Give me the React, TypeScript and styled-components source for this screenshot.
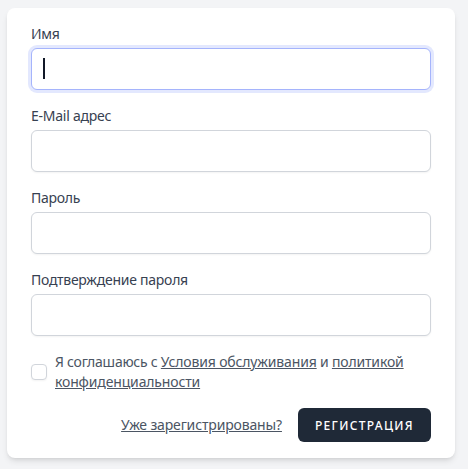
import styled, { createGlobalStyle, css } from "styled-components";

const Global = createGlobalStyle`
  html, body {
    margin: 0;
    padding: 0;
    background: #f3f4f6;
    font-family: "Noto Sans", "Open Sans", sans-serif;
  }
  * { box-sizing: border-box; }
`;

const Page = styled.div`
  padding: 8px 7px;
`;

const Card = styled.form`
  width: 448px;
  padding: 16px 24px;
  background: #fff;
  border-radius: 8px;
  box-shadow: 0 4px 6px -1px rgba(0, 0, 0, 0.1), 0 2px 4px -2px rgba(0, 0, 0, 0.1);
`;

const Field = styled.div<{ $first?: boolean }>`
  margin-top: ${(p) => (p.$first ? 0 : 16)}px;
`;

const Label = styled.label`
  display: block;
  font-size: 14px;
  line-height: 20px;
  font-weight: 400;
  letter-spacing: -0.25px;
  color: #374151;
`;

const InputWrap = styled.div`
  position: relative;
  margin-top: 4px;
`;

const Input = styled.input<{ $focused?: boolean }>`
  display: block;
  width: 100%;
  height: 42px;
  padding: 8px 12px;
  font: inherit;
  font-size: 16px;
  line-height: 24px;
  border: 1px solid #d1d5db;
  border-radius: 6px;
  box-shadow: 0 1px 2px rgba(0, 0, 0, 0.05);
  outline: none;
  caret-color: transparent;
  ${(p) =>
    p.$focused &&
    css`
      border-color: #a5b4fc;
      box-shadow: 0 0 0 3px rgba(199, 210, 254, 0.5);
    `}
`;

const Caret = styled.span`
  position: absolute;
  left: 12px;
  top: 10px;
  width: 1.5px;
  height: 21px;
  background: #111827;
`;

const AgreeRow = styled.div`
  display: flex;
  align-items: flex-start;
  margin-top: 16px;
`;

const Check = styled.span`
  flex: none;
  width: 16px;
  height: 16px;
  margin-top: 12px;
  border: 1px solid #d1d5db;
  border-radius: 4px;
  background: #fff;
  box-shadow: 0 1px 2px rgba(0, 0, 0, 0.05);
`;

const AgreeText = styled.div`
  margin-left: 8px;
  font-size: 14px;
  line-height: 20px;
  letter-spacing: -0.25px;
  color: #4b5563;
`;

const Link = styled.a`
  color: #4b5563;
  text-decoration: underline;
  font-size: 14px;
  line-height: 20px;
  letter-spacing: -0.15px;
`;

const Actions = styled.div`
  display: flex;
  align-items: center;
  justify-content: flex-end;
  gap: 16px;
  margin-top: 16px;
`;

const Button = styled.button`
  display: inline-flex;
  align-items: center;
  height: 34px;
  padding: 0 16px;
  border: 1px solid transparent;
  border-radius: 6px;
  background: #1f2937;
  color: #fff;
  font: inherit;
  font-size: 12px;
  font-weight: 500;
  letter-spacing: 0.11em;
  text-transform: uppercase;
`;

const fields = ["Имя", "E-Mail адрес", "Пароль", "Подтверждение пароля"];

export default function App() {
  return (
    <Page>
      <Global />
      <Card onSubmit={(e) => e.preventDefault()}>
        {fields.map((f, i) => (
          <Field key={f} $first={i === 0}>
            <Label>{f}</Label>
            <InputWrap>
              <Input
                $focused={i === 0}
                type={i >= 2 ? "password" : i === 1 ? "email" : "text"}
              />
              {i === 0 && <Caret />}
            </InputWrap>
          </Field>
        ))}
        <AgreeRow>
          <Check />
          <AgreeText>
            Я соглашаюсь с <Link href="#">Условия обслуживания</Link> и{" "}
            <Link href="#">политикой конфиденциальности</Link>
          </AgreeText>
        </AgreeRow>
        <Actions>
          <Link href="#">Уже зарегистрированы?</Link>
          <Button type="submit">Регистрация</Button>
        </Actions>
      </Card>
    </Page>
  );
}
